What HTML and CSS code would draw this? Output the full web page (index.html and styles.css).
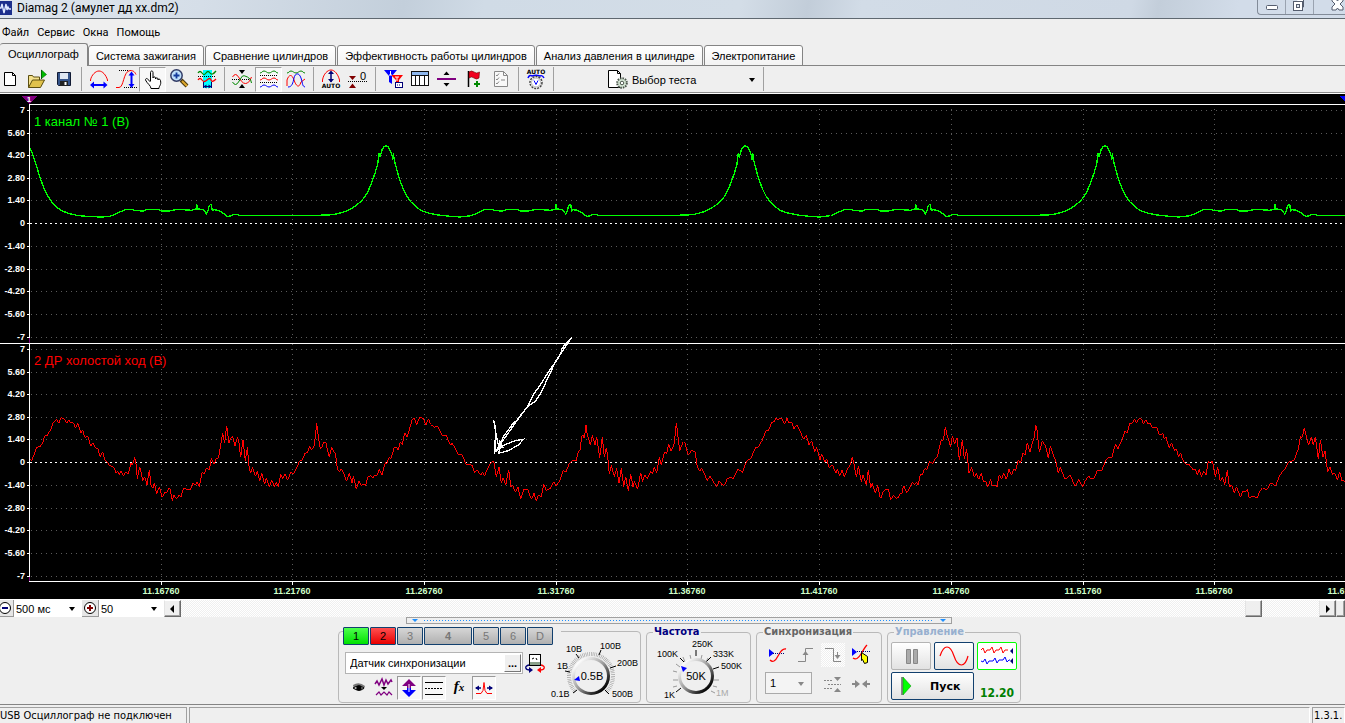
FILE: index.html
```html
<!DOCTYPE html>
<html lang="ru">
<head>
<meta charset="utf-8">
<title>Diamag 2</title>
<link rel="stylesheet" href="styles.css">
</head>
<body>
<header class="titlebar">
  <svg class="app-icon" width="12" height="16" viewBox="0 0 12 16"><path fill="#1c2f8c" d="M0 1h12v14H0z"/><path d="M0 8h1l1-4 2 9 2-9 1 6 1-3 1 2h2" fill="none" stroke="#dfe8ff" stroke-width="1.4"/></svg>
  <h1 class="title">Diamag 2 (амулет дд xx.dm2)</h1>
  <div class="window-buttons">
    <button class="wbtn" aria-label="Свернуть"><svg width="27" height="14"><rect x="8.500" y="5.500" width="11" height="4" rx="1" fill="#fff" stroke="#555d6e"/></svg></button>
    <button class="wbtn" aria-label="Восстановить"><svg width="27" height="14"><path d="M10.500-1h7v8h-3" fill="#fff" stroke="#555d6e"/><rect x="7.500" y="1.500" width="9" height="9" fill="#fff" stroke="#555d6e"/><rect x="10.500" y="4.500" width="3" height="3" fill="#dfe6ef" stroke="#555d6e"/></svg></button>
    <button class="wbtn wbtn-close" aria-label="Закрыть"><svg width="48" height="14"><path d="M18-1h4l1.500 2L25-1h4v2l-3 3 3 3v3h-4l-1.500-2L22 10h-4V7l3-3-3-3z" fill="#fff" stroke="#555d6e"/></svg></button>
  </div>
</header>
<nav class="menu">
  <button>Файл</button><button>Сервис</button><button>Окна</button><button>Помощь</button>
</nav>
<nav class="tabs">
  <button class="tab tab-active">Осциллограф</button><button class="tab">Система зажигания</button><button class="tab">Сравнение цилиндров</button><button class="tab">Эффективность работы цилиндров</button><button class="tab">Анализ давления в цилиндре</button><button class="tab">Электропитание</button>
</nav>
<div class="toolbar">
  <button class="tool" aria-label="Новый"><svg viewBox="0 0 27 26"><path d="M8.500 5.500h8l3 3v10h-11z" fill="#fff" stroke="#000"/><path d="M16.500 5.500v3h3" fill="none" stroke="#000"/></svg></button>
  <button class="tool" aria-label="Открыть"><svg viewBox="0 0 27 26"><path d="M5.500 20.500v-12h4l1 1.500h6v3" fill="#f3e08c" stroke="#5c4f10"/><path d="M5.500 20.500l4-7.500h12l-4 7.500z" fill="#e0c24c" stroke="#5c4f10"/><path d="M18.500 12V3" stroke="#222"/><path d="M18.500 3l5 4.500-5 4z" fill="#0b0" stroke="#060" stroke-width=".6"/></svg></button>
  <button class="tool" aria-label="Сохранить"><svg viewBox="0 0 27 26"><path d="M7.500 5.500h13v13h-12l-1-1z" fill="#35548a" stroke="#111a33"/><path d="M10 6h8v6h-8z" fill="#dfe7f2"/><path d="M10 14h8v5h-8z" fill="#222"/><path d="M14.500 15h2v3h-2z" fill="#fff"/></svg></button>
  <i class="sep"></i>
  <button class="tool" aria-label="Масштаб по времени"><svg viewBox="0 0 27 26"><path d="M5.500 14v-1c1-5 5-9 8.500-9s7 4 8.500 9v1" fill="none" stroke="red"/><path d="M8 18h11" stroke="#00f" stroke-width="2"/><path d="M5 18l4-3.500v7zM22.500 18l-4-3.500v7z" fill="#00f"/></svg></button>
  <button class="tool" aria-label="Масштаб по амплитуде"><svg viewBox="0 0 27 26"><path d="M7 3.500h9M12 20.500h13" stroke="#000" stroke-dasharray="1 1"/><path d="M4 20.500h3c5 0 4-16 11-17 4 0 5 2 6 4" fill="none" stroke="red"/><path d="M19.500 8v9" stroke="#00f" stroke-width="2"/><path d="M19.500 4.500l3 4h-6zM19.500 21l3-4h-6z" fill="#00f"/></svg></button>
  <button class="tool tool-on" aria-label="Рука"><svg viewBox="0 0 27 26"><path d="M11.500 14V5.500c0-2 2.500-2 2.500 0V11c0-1.500 2.500-1.500 2.500 0v1c0-1.500 2.500-1.500 2.500 0v1c0-1.500 2.500-1 2.500.5 1 5-1.500 5-1.500 8h-8c0-3-4-5-5.500-8.500 0-2 2-2 3 0l2 2" fill="#fff" stroke="#000"/></svg></button>
  <button class="tool" aria-label="Лупа"><svg viewBox="0 0 27 26"><path d="M15 13l6 6" stroke="#4a3a10" stroke-width="4"/><path d="M16 14l5 5" stroke="#e0a92c" stroke-width="2"/><circle cx="10.500" cy="8.500" r="5.700" fill="#bfe0fb" stroke="#333c66" stroke-width="1.500"/><path d="M7.500 8.500h6M10.500 5.500v6" stroke="#123a9c" stroke-width="1.800"/></svg></button>
  <button class="tool" aria-label="Фрагмент"><svg viewBox="0 0 27 26"><path d="M10 3h9v18h-9z" fill="#0ff"/><path d="M5 6q2-3 4 0t4 0 4 0 6-2" fill="none" stroke="#080" stroke-width="1.300"/><path d="M5 9.500h18" stroke="#000" stroke-dasharray="1 1"/><path d="M5 13q2-3 4 0t5 0 4 0 5-1" fill="none" stroke="red" stroke-width="1.300"/><path d="M10.500 15v6m8-6v6M11 19.500h8" stroke="#007"/><path d="M10.500 19.500l3-2v4zM18.500 19.500l-3-2v4z" fill="#007"/></svg></button>
  <i class="sep"></i>
  <button class="tool" aria-label="Совместить"><svg viewBox="0 0 27 26"><path d="M4 12.500h20" stroke="#000" stroke-dasharray="1 1"/><path d="M4.500 10q3-5 6 0t5 6 4 0 4-6" fill="none" stroke="red"/><path d="M4.500 15q3 5 6 0t4-6 5 1 4 6" fill="none" stroke="#080"/><path d="M11 3h6l-3 4zM11 21h6l-3-4z"/></svg></button>
  <button class="tool tool-on" aria-label="Раздельно"><svg viewBox="0 0 27 26"><path d="M5 6c2 0 2-2 4-2s3 2 5 2 3-2 5-2 2 2 4 2" fill="none" stroke="#080"/><path d="M5 8.500h18M5 15.500h18" stroke="#000" stroke-dasharray="1 1"/><path d="M5 13c2 0 2-2 4-2s3 2 5 2 3-2 5-2 2 2 4 2" fill="none" stroke="red"/><path d="M5 20c2 0 2-2 4-2s3 2 5 2 3-2 5-2 2 2 4 2" fill="none" stroke="#00f"/></svg></button>
  <button class="tool" aria-label="Наложить"><svg viewBox="0 0 27 26"><path d="M5 6c2 0 2-2 4-2s3 2 5 2 3-2 5-2 2 2 4 2" fill="none" stroke="#080"/><path d="M5 19V13c2-6 5-6 7 0s5 9 7 2l4-3" fill="none" stroke="red"/><path d="M6 20c4 0 5-4 6-9s5-6 7 0 1 8 4 9" fill="none" stroke="#00f"/></svg></button>
  <i class="sep"></i>
  <button class="tool" aria-label="Автомасштаб"><svg viewBox="0 0 27 26"><path d="M5.500 15v-2c1-6 5-10 8.500-10s7 4 8.500 10v2" fill="none" stroke="red"/><path d="M14 5v10" stroke="#007" stroke-width="1.500"/><path d="M14 3.500l3 3.500h-6zM14 15.500l3-3.500h-6z" fill="#007"/><text class="auto" x="14" y="21">AUTO</text></svg></button>
  <button class="tool" aria-label="Обнулить"><svg viewBox="0 0 27 26"><path d="M4 14.500h19" stroke="#000" stroke-dasharray="1 1"/><path d="M5 9h7l-3.500 4zM5 21h7l-3.500-4.500z" fill="#800000"/><text class="zero" x="16" y="13">0</text></svg></button>
  <i class="sep"></i>
  <button class="tool" aria-label="Фильтр"><svg viewBox="0 0 27 26"><path d="M5 3h13l-5 6v8l-3-2V9z" fill="#00f"/><path d="M12 8h12l-4 5v5l-3-1v-4z" fill="red"/><path d="M11.500 4v4M10 8h3M16 10h4M18 10v4" stroke="#fff"/><rect x="16.500" y="15.500" width="7" height="5" fill="#fff" stroke="#007"/><path d="M18 18h4" stroke="#007" stroke-dasharray="1 1"/></svg></button>
  <button class="tool" aria-label="Таблица"><svg viewBox="0 0 27 26"><rect x="5.500" y="4.500" width="17" height="14" fill="#fff" stroke="#111"/><path d="M6 5h16v3H6z" fill="#8fb8ef"/><path d="M6 8.500h16M9.500 8v10M13.500 8v10M18.500 8v10" stroke="#111"/></svg></button>
  <button class="tool" aria-label="Маркер"><svg viewBox="0 0 27 26"><path d="M4 12h19" stroke="#800080" stroke-width="2"/><path d="M10.500 8h6l-3-3.500zM10.500 16h6l-3 3.500z"/></svg></button>
  <button class="tool" aria-label="Добавить флаг"><svg viewBox="0 0 27 26"><path d="M8.500 4v16" stroke="#000" stroke-width="1.500"/><path d="M9 5q2.500-2 5 0t5.500 0l-.5 6q-2.500 2-5 0t-5 0z" fill="#f00020" stroke="#600" stroke-width=".6"/><path d="M17 14v6M14 17h6" stroke="#080" stroke-width="2"/></svg></button>
  <button class="tool" aria-label="Список" disabled><svg viewBox="0 0 27 26"><path d="M7.500 4.500h9l4 4v11h-13z" fill="#f8f8f8" stroke="#888"/><path d="M16.500 4.500v4h4M9 8l1 1 2-2.500M9 12l1 1 2-2.500M9 16l1 1 2-2.500M14 13h4" fill="none" stroke="#888"/></svg></button>
  <i class="sep"></i>
  <button class="tool" aria-label="Автонапряжение"><svg viewBox="0 0 27 26"><text class="auto" x="14" y="7">AUTO</text><path d="M6 11c1-3 3-3 4-2 3-1 5-1 8 0 2-1 3 0 4 2" fill="none" stroke="#00f" stroke-width="1.500"/><circle cx="14" cy="15.500" r="6" fill="#fff" stroke="#444" stroke-width="1.500" stroke-dasharray="2 1"/><circle cx="14" cy="15.500" r="4.500" fill="#fff" stroke="#888" stroke-width=".6"/><path d="M12 13.500l2 4 2-4" fill="none" stroke="#00f"/></svg></button>
  <i class="sep"></i>
  <button class="test-picker"><svg width="22" height="22"><path d="M1.500 1.500h9l3 3v14h-12z" fill="#fff" stroke="#000"/><path d="M10.500 1.500v3h3" fill="none" stroke="#000"/><circle cx="15" cy="14" r="4.800" fill="#d9ead9" stroke="#4a544a" stroke-width="2" stroke-dasharray="1.500 1"/><circle cx="15" cy="14" r="1.800" fill="#fff" stroke="#4a544a"/></svg><span>Выбор теста</span><b class="caret"></b></button>
  <i class="sep"></i>
</div>

<main class="scope">
<svg class="plot" width="100%" height="505" shape-rendering="crispEdges">
  <g class="grid">
    <path d="M31 16.500h9999M31 39.500h9999M31 61.500h9999M31 84.500h9999M31 106.500h9999M31 152.500h9999M31 175.500h9999M31 197.500h9999M31 220.500h9999M31 243.500h9999"/>
    <path d="M31 255.500h9999M31 278.500h9999M31 300.500h9999M31 323.500h9999M31 345.500h9999M31 391.500h9999M31 414.500h9999M31 436.500h9999M31 459.500h9999M31 482.500h9999"/>
    <path d="M161.500 15v228M292.500 15v228M424.500 15v228M556.500 15v228M687.500 15v228M819.500 15v228M951.500 15v228M1083.500 15v228M1214.500 15v228"/>
    <path d="M161.500 250v236M292.500 250v236M424.500 250v236M556.500 250v236M687.500 250v236M819.500 250v236M951.500 250v236M1083.500 250v236M1214.500 250v236"/>
  </g>
  <path class="zero-line" d="M30 129.500h9999M30 368.500h9999"/>
  <path class="axis" d="M29 10.500h9999M0 249.500h9999M29 487.500h9999M29.500 10v233M29.500 250v232"/>
  <path class="axis" d="M27 16.500h3M27 39.500h3M27 61.500h3M27 84.500h3M27 106.500h3M27 129.500h3M27 152.500h3M27 175.500h3M27 197.500h3M27 220.500h3M27 243.500h3M27 255.500h3M27 278.500h3M27 300.500h3M27 323.500h3M27 345.500h3M27 368.500h3M27 391.500h3M27 414.500h3M27 436.500h3M27 459.500h3M27 482.500h3"/>
  <path class="ticks" d="M161.500 488v3M292.500 488v3M424.500 488v3M556.500 488v3M687.500 488v3M819.500 488v3M951.500 488v3M1083.500 488v3M1214.500 488v3"/>
  <path class="cursor-line" d="M29.500 3v7M29.500 244v5M29.500 483v4"/>
  <path class="cursor" d="M22 2h15l-7.500 8z"/>
  <text class="cursor-text" x="29" y="8">1</text>
  <path fill="#00f" d="M1339 2h8v7z"/>
  <g class="ylabels">
    <text x="25" y="19">7</text><text x="25" y="42">5.60</text><text x="25" y="64">4.20</text><text x="25" y="87">2.80</text><text x="25" y="109">1.40</text><text x="25" y="132">0</text><text x="25" y="155">-1.40</text><text x="25" y="178">-2.80</text><text x="25" y="200">-4.20</text><text x="25" y="223">-5.60</text><text x="25" y="246">-7</text>
    <text x="25" y="258">7</text><text x="25" y="281">5.60</text><text x="25" y="303">4.20</text><text x="25" y="326">2.80</text><text x="25" y="348">1.40</text><text x="25" y="371">0</text><text x="25" y="394">-1.40</text><text x="25" y="417">-2.80</text><text x="25" y="439">-4.20</text><text x="25" y="462">-5.60</text><text x="25" y="485">-7</text>
  </g>
  <g class="xlabels">
    <text x="161" y="500">11.16760</text><text x="292" y="500">11.21760</text><text x="424" y="500">11.26760</text><text x="556" y="500">11.31760</text><text x="687" y="500">11.36760</text><text x="819" y="500">11.41760</text><text x="951" y="500">11.46760</text><text x="1083" y="500">11.51760</text><text x="1214" y="500">11.56760</text><text x="1346" y="500">11.61760</text>
  </g>
  <text class="channel ch1" x="34" y="32">1 канал № 1 (В)</text>
  <text class="channel ch2" x="34" y="271">2 ДР холостой ход (В)</text>
  <g class="trace trace1" transform="translate(0 -4) scale(.333333)">
    <polyline points="90,175 95,185 102,205 110,230 120,262 130,290 140,312 150,328 160,342 170,352 185,362 205,370 235,377 260,379 300,381 325,380 335,377"/>
    <polyline id="cycle" points="335,377 350,371 362,365 375,359 400,359 405,362 430,363 440,359 475,359 485,363 508,363 520,360 535,358 575,361 588,357 590,342 593,357 605,358 612,361 619,372 624,363 628,346 634,343 637,362 642,359 655,361 670,370 682,379 692,378 700,374 712,374 720,377 750,376 900,377 985,375 1005,373 1020,369 1035,365 1055,355 1070,345 1082,335 1095,320 1105,302 1115,278 1125,250 1133,222 1137,188 1140,200 1146,180 1152,170 1158,167 1165,171 1172,185 1176,195 1178,210 1180,190 1184,215 1192,245 1200,272 1210,298 1220,318 1232,335 1248,350 1262,361 1285,369 1315,375 1350,379 1380,381 1413,377"/>
    <use href="#cycle" x="1078"/><use href="#cycle" x="2157"/><use href="#cycle" x="3235"/>
  </g>
  <g class="trace trace2">
    <polyline transform="translate(0 246) scale(.333333)" points="90,358 95,362 100,350 105,335 110,322 120,320 127,312 133,290 137,284 141,288 147,276 152,270 158,250 163,244 169,238 176,250 183,234 187,234 195,240 200,250 206,239 210,246 220,248 227,265 233,248 243,278 248,270 254,292 264,290 272,318 279,310 288,325 293,325 301,350 308,336 315,360 330,377 340,380 348,398 353,393 358,404 363,394 371,408 377,396 385,401 393,368 397,376 404,352 408,370 412,416 419,380 424,400 428,422 434,410 441,434 448,390 453,435 459,445 463,428 470,463 478,440 486,472 495,457 500,458 507,443 511,450 517,482 522,466 530,477 536,466 543,470 551,443 558,447 572,448 580,428 586,436 591,425 598,441 606,398 612,402 620,383 628,390 634,355 642,372 648,358 656,352 662,315 668,280 674,310 680,257 687,310 691,295 698,290 705,317 713,292 717,310 722,352 729,300 736,362 742,322 748,388 752,400 757,382 767,409 772,393 779,424 785,398 794,432 799,415 808,442 815,420 823,440 829,427 835,440 842,403 848,416 855,402 863,420 872,397 880,402 890,384 897,366 906,360 915,340 922,338 929,318 935,330 943,316 950,250 955,290 961,326 967,322 971,305 978,310 988,352 995,320 1001,336 1006,340 1012,385 1018,396 1024,386 1031,400 1040,424 1048,400 1056,428 1060,408 1069,447 1077,422 1083,436 1090,432 1097,436 1104,410 1112,407 1118,415 1124,406 1132,405 1138,388 1146,404 1156,368 1161,370 1168,350 1172,358 1182,325 1189,320 1195,331 1201,305 1207,315 1214,278 1221,292 1229,265 1236,240 1243,235 1250,254 1259,231 1270,235 1278,255 1285,236 1292,253 1303,262 1312,257 1320,274"/>
    <polyline transform="translate(440 236) scale(.333333)" points="0,304 8,317 18,316 32,346 36,338 45,355 55,375 66,374 78,402 96,406 104,428 112,420 122,436 127,426 134,437 146,408 158,392 162,400 169,440 177,412 184,458 190,443 197,466 206,420 213,470 218,466 226,486 234,472 242,506 252,478 264,480 274,508 282,490 289,512 296,494 304,502 311,462 319,482 332,474 341,455 348,468 358,455 369,422 378,426 388,400 400,390 408,392 414,368 420,360 425,320 429,316 433,325 438,284 442,318 446,325 451,345 457,316 465,344 470,320 479,384 487,322 493,382 499,353 503,380 508,432 514,406 523,440 530,415 537,460 544,415 551,470 557,440 565,482 572,433 579,470 583,454 593,478 602,428 608,455 614,434 622,447 632,424 637,432 643,412 650,428 658,382 664,405 674,365 680,370 686,342 693,364 697,355 703,340 709,278 714,320 719,362 730,335 735,340 745,376 755,360 765,366 772,410 779,424 785,414 802,452 810,438 820,455 830,470 838,452 846,464 853,466 862,446 870,442 880,446 894,418 908,427 920,392 932,386 946,354 956,350 966,332 977,304 986,300 995,277 1003,275 1007,264 1013,270 1024,263 1034,282 1041,265 1047,278 1054,275 1062,296 1071,284 1083,310 1091,328 1099,316 1107,345 1115,332 1124,365 1130,352 1140,390 1145,372 1155,396 1160,388 1168,414 1177,404 1188,430 1192,418 1199,438 1206,420 1213,440 1222,418 1230,405 1237,382 1242,402 1249,442 1255,408 1264,455 1269,435 1279,465 1285,420 1292,475 1297,460 1306,490 1313,466 1320,502"/>
    <polyline transform="translate(880 286) scale(.333333)" points="0,352 4,354 8,338 16,328 25,328 32,360 40,346 47,355 55,353 62,338 65,342 71,317 80,338 90,322 97,307 104,314 109,306 114,315 121,284 127,284 134,266 141,268 149,244 157,251 166,236 173,228 182,184 190,180 196,140 201,165 212,200 217,168 224,192 231,173 238,241 247,180 253,236 260,208 267,280 275,262 283,292 289,280 296,298 304,280 310,305 317,303 323,322 332,298 337,318 346,316 351,320 358,284 365,297 371,280 379,298 387,268 394,286 401,268 407,272 415,240 421,250 429,220 435,226 442,188 450,216 458,186 463,170 467,134 471,150 478,216 487,184 497,198 505,235 511,198 522,230 528,245 535,280 541,260 553,295 560,295 570,286 586,319 596,298 608,320 617,300 627,288 632,296 641,296 652,272 665,273 677,240 687,233 696,232 706,193 714,206 722,188 728,175 735,154 742,158 749,130 756,130 764,116 769,130 776,116 784,117 791,132 798,119 804,133 810,128 817,142 830,142 839,166 848,160 853,176 858,172 868,205 874,188 884,212 889,208 896,230 902,218 908,240 920,256 926,252 940,270 947,270 952,285 958,268 964,290 971,274 978,284 985,243 992,250 997,243 1006,290 1013,262 1021,304 1028,292 1034,314 1042,270 1048,322 1055,314 1063,340 1069,320 1082,352 1088,334 1097,334 1102,328 1108,354 1118,348 1132,354 1140,332 1148,323 1160,330 1173,308 1187,318 1200,284 1213,270 1226,247 1243,240 1255,206 1261,170 1267,172 1273,143 1279,170 1286,195 1294,170 1300,195 1306,170 1315,238 1321,180 1329,232 1335,214 1343,276 1350,262 1358,284 1364,278 1372,300 1379,275 1386,304 1391,300 1400,316"/>
  </g>
  <g class="trace note" transform="translate(440 236) scale(.333333)">
    <polyline points="395,22 348,92 330,130 302,190 285,215 262,230 234,268 218,282 190,320 180,350"/>
    <polyline points="392,28 380,38 366,55 362,72 345,98 328,122 300,166 280,194 263,230 240,258 215,295 190,330 178,345"/>
    <polyline points="160,270 164,282 169,318 175,345 188,350 180,335 177,368"/>
    <polyline points="161,270 166,300 165,366 180,345 185,352 165,366"/>
    <polyline points="175,370 205,362 235,345 250,328 225,332 195,344 180,352 165,366"/>
  </g>
</svg>
</main>

<div class="timebar">
  <button class="flat" aria-label="Уменьшить"><svg width="13" height="16"><circle cx="5" cy="8" r="5.500" fill="#fff" stroke="#000"/><path d="M2 8h6" stroke="#007" stroke-width="2"/></svg></button>
  <label class="combo combo-a"><select aria-label="Развёртка"><option>500 мс</option></select></label>
  <button class="flat" aria-label="Увеличить"><svg width="16" height="16"><circle cx="8" cy="8" r="5.500" fill="#fff" stroke="#000"/><path d="M5 8h6M8 5v6" stroke="#800000" stroke-width="2"/></svg></button>
  <label class="combo combo-b"><select aria-label="Масштаб"><option>50</option></select></label>
  <button class="raised" aria-label="Влево"><svg width="14" height="14"><path d="M9 3v8L5 7z"/></svg></button>
  <div class="track"><span class="raised thumb"></span></div>
  <button class="raised" aria-label="Вправо"><svg width="14" height="14"><path d="M6 3v8l4-4z"/></svg></button>
  <span class="raised corner"></span>
</div>

<section class="dock">
  <div class="handle"><b></b><i></i><b></b></div>
  <div class="groups">
    <div class="group group-channel">
      <div class="channel-side">
        <div class="channels">
          <button class="chan chan-green">1</button><button class="chan chan-red">2</button><button class="chan">3</button><button class="chan chan-wide">4</button><button class="chan">5</button><button class="chan">6</button><button class="chan">D</button>
        </div>
        <div class="name-row">
          <div class="name-box"><input type="text" value="Датчик синхронизации" aria-label="Название канала"><button class="dots" aria-label="Обзор">...</button></div>
          <button class="mini" aria-label="Прибор"><svg width="24" height="22"><rect x="6.500" y="1.500" width="11" height="11" fill="#fff" stroke="#000"/><path d="M7 9h10v3H7z" fill="#8aa08a"/><path d="M9 6l2-1m2 0l1 2" stroke="#000"/><path d="M6 12c-5 1-4 5 1 5" fill="none" stroke="#007" stroke-width="1.300"/><path d="M6 14l4 3-4 3z" fill="#007"/><path d="M18 12c5 1 4 5-1 5" fill="none" stroke="red" stroke-width="1.300"/><path d="M18 14l-4 3 4 3z" fill="red"/></svg></button>
        </div>
        <div class="mode-row">
          <button class="mini" aria-label="Видимость"><svg width="24" height="22"><path d="M6 8q6-4 12 1l-1 3q-5 4-10 0z" fill="#777"/><path d="M6 11q6-4 11 0-5 4-11 0z" fill="#ddd" stroke="#000"/><circle cx="12" cy="11" r="2.700"/></svg></button>
          <button class="mini" aria-label="Фильтрация"><svg width="24" height="22"><path d="M3 7l2-3 2 4 3-6 2 6 2-5 2 4 3-4 1 2" fill="none" stroke="#800080" stroke-width="1.500"/><path d="M9 10h6l-3 3z"/><path d="M4 18l3-3 2 3 3-3 3 3 2-3 3 3" fill="none" stroke="#800080" stroke-width="1.200"/></svg></button>
          <button class="mini mini-on" aria-label="Смещение"><svg width="24" height="22"><path d="M12 2l7 7h-5v2h-4V9H5z" fill="#800080"/><path d="M12 20l7-7h-5v-2h-4v2H5z" fill="#00f"/><path d="M12 7v8" stroke="#fff"/></svg></button>
          <button class="mini mini-on" aria-label="Линии"><svg width="24" height="22"><path d="M3 5.500h18M3 17.500h18" stroke="#000"/><path d="M3 11.500h18" stroke="#000" stroke-dasharray="2 1"/></svg></button>
          <button class="mini fx" aria-label="Функция">f<small>x</small></button>
          <button class="mini mini-on" aria-label="Импульс"><svg width="24" height="22"><path d="M4 16.500h5l2-3 1-8 1 8 2 3h5" fill="none" stroke="red"/><path d="M4 11h5m6 0h5" stroke="#007" stroke-width="1.600"/><path d="M7 8.500v5L3 11zM17 8.500v5l4-2.500z" fill="#007"/></svg></button>
        </div>
      </div>
      <svg class="dial" width="92" height="68">
        <defs><linearGradient id="rim" x1="0" y1="0" x2="1" y2="1"><stop offset=".15" stop-color="#fff"/><stop offset=".5" stop-color="#999"/><stop offset=".85" stop-color="#000"/></linearGradient></defs>
        <circle class="scale" cx="44" cy="44" r="22" pathLength="240" transform="rotate(135 44 44)" stroke-dasharray="1 2 1 2 1 2 1 2 1 2 1 2 1 2 1 2 1 2 1 2 1 2 1 2 1 2 1 2 1 2 1 2 1 2 1 2 1 2 1 2 1 2 1 2 1 2 1 2 1 2 1 2 1 2 1 2 1 2 1 2 1 2 1 2 1 2 1 2 1 2 1 2 1 2 1 2 1 2 1 2 1 2 1 2 1 2 1 2 1 2 1 2 1 2 1 2 1 2 1 2 1 2 1 2 1 2 1 2 1 2 1 2 1 2 1 2 1 2 1 2 1 60"/>
        <path class="marks" d="M30 58l-4 3M23 40l-5-1M32 26l-3-4M52 23l2-5M63 36l6-2M58 58l4 4"/>
        <circle cx="44" cy="44" r="19" fill="url(#rim)"/><circle cx="44" cy="44" r="16" fill="#efefef"/>
        <path fill="#00f" d="M27 48l5-4 1 5z"/>
        <text class="dial-value" x="45" y="48">0.5В</text>
        <text x="4" y="65">0.1В</text><text x="10" y="37">1В</text><text x="19" y="20">10В</text><text x="53" y="17">100В</text><text x="70" y="34">200В</text><text x="65" y="65">500В</text>
      </svg>
    </div>
    <fieldset class="group group-rate"><legend>Частота</legend>
      <svg class="dial" width="100" height="64" viewBox="0 2 100 64">
        <path class="scale-lines" d="M31 44h-5M30 50l-4 1M30 36l-4-1M33 31l-4-3M38 26l-2-5M44 23l-1-4M54 23l1-4M59 26l2-4M67 44h5M66 50l4 1M64 55l4 2"/>
        <path class="marks" d="M34 52l-5 4M37 26l-4-4M49 20v-6M59 26l5-5M66 33l6-2"/>
        <circle cx="49" cy="40" r="18" fill="url(#rim)"/><circle cx="49" cy="40" r="15" fill="#efefef"/>
        <path fill="#00f" d="M34 30l6 2-4 4z"/>
        <text class="dial-value" x="49" y="44">50K</text>
        <text x="17" y="62">1K</text><text x="10" y="21">100K</text><text x="45" y="11">250K</text><text x="66" y="21">333K</text><text x="74" y="33">500K</text><text class="off" x="69" y="60">1M</text>
      </svg>
    </fieldset>
    <fieldset class="group group-sync"><legend>Синхронизация</legend>
      <div class="sync-grid">
        <button class="mini" aria-label="Уровень"><svg width="24" height="22"><path d="M5 16q4 4 8-4t8-7" fill="none" stroke="red" stroke-width="1.300"/><path d="M4 5l5 4-5 4z" fill="#00f"/><path d="M8 9.500h12" stroke="#007" stroke-dasharray="1 1"/></svg></button>
        <button class="mini" aria-label="Фронт" disabled><svg width="24" height="22"><path d="M5 17.500h7.500v-13H20" fill="none" stroke="#888"/><path d="M12.500 7l3 4h-6z" fill="#888"/></svg></button>
        <button class="mini dither" aria-label="Спад" disabled><svg width="24" height="22"><path d="M4 4.500h8.500v13H20M16.500 8v6" fill="none" stroke="#888"/><path d="M16.500 15l3-4h-6z" fill="#888"/></svg></button>
        <button class="mini" aria-label="Выбор уровня"><svg width="24" height="22"><path d="M4 14q4 3 8-4t6-9" fill="none" stroke="red" stroke-width="1.300"/><path d="M3 4l5 4-5 4z" fill="#00f"/><path d="M8 7.500h13" stroke="#007" stroke-dasharray="1 1"/><path d="M12.500 8.500l6 4v6l-3 1-2-4-1 1z" fill="#ff0" stroke="#000"/></svg></button>
        <label class="sync-select"><select aria-label="Канал" disabled><option>1</option></select></label>
        <button class="mini" aria-label="Порог" disabled><svg width="24" height="22"><path d="M3 7.500h9M3 15.500h9M7 11.500h13" stroke="#888" stroke-dasharray="2 1"/><path d="M13 4h7l-3.500 4zM13 19h7l-3.500-4z" fill="#888"/></svg></button>
        <button class="mini" aria-label="Сжать" disabled><svg width="24" height="22"><path d="M3 11h4m10 0h4" stroke="#888" stroke-width="2"/><path d="M6 7l5 4-5 4zM18 7l-5 4 5 4z" fill="#888"/></svg></button>
      </div>
    </fieldset>
    <fieldset class="group group-run"><legend>Управление</legend>
      <div class="run-grid">
        <button class="big big-off" aria-label="Пауза" disabled><svg width="36" height="24"><path d="M13.500 5.500h4v14h-4zM20.500 5.500h4v14h-4z" fill="#aaa" stroke="#888"/></svg></button>
        <button class="big" aria-label="Синус"><svg width="36" height="24"><path d="M4 12C8 0 14 0 18 12s11 12 14 0" fill="none" stroke="red" stroke-width="1.200"/></svg></button>
        <button class="big big-on" aria-label="Непрерывно"><svg width="36" height="24"><path d="M2 6l2-2 2 5 2-3h3l2-3 2 6 2-3h3l2-3 2 6 2-3h3" fill="none" stroke="red"/><path d="M2 17l2 1 2-3 2 5 2-3h4l2-3 2 5 2-3h4l2-3 2 5 2-2h1" fill="none" stroke="#00f"/><path d="M34 4v6l-3-3zM34 14v6l-3-3z" fill="#007"/></svg></button>
        <button class="big start"><svg width="20" height="20"><path d="M2 1v18" stroke="#888" stroke-width="2"/><path d="M3 1l8 9-8 9z" fill="#0f0" stroke="#080" stroke-width=".5"/></svg><span>Пуск</span></button>
        <output class="reading">12.20</output>
      </div>
    </fieldset>
  </div>
</section>
<footer class="status"><span class="cell cell-a">USB Осциллограф не подключен</span><span class="cell cell-b"></span><span class="cell cell-c">1.3.1.</span></footer>
</body>
</html>
```

FILE: styles.css
```css
* { box-sizing: border-box; }
body {
  margin: 0; min-height: 100vh; display: flex; flex-direction: column; overflow: hidden;
  background: #efefef; color: #000; font: 11px/14px "Liberation Sans", Arial, sans-serif;
}
button, input, select { font: inherit; color: inherit; margin: 0; padding: 0; border: 0; background: none; border-radius: 0; }
svg { display: block; flex: none; }
fieldset { min-width: 0; margin: 0; }

.titlebar {
  display: flex; align-items: flex-start; height: 19px; border-bottom: 1px solid #5f6870;
  background: linear-gradient(100deg, #dfe6ee 0, #d5dee8 15%, #c3cfdb 30%, #d0dbe6 36%, #d3dde7 55%, #c2cdd9 60%, #d2dce7 64%, #cfd9e5 84%, #c3ceda 86%, #d2dce9 92%);
}
.title { margin: 0 0 0 5px; font: 12px/16px Roboto, "Open Sans", sans-serif; }
.window-buttons { margin-left: auto; display: flex; height: 15px; border: 1px solid #828b98; border-width: 0 0 1px 1px; border-radius: 0 0 0 4px; }
.wbtn { border-right: 1px solid #9aa3b0; height: 14px; overflow: hidden; }
.wbtn-close { border: 0; width: 31px; }

.menu { display: flex; gap: 8px; height: 24px; padding: 0 2px; font: 11px/27px Roboto, "Open Sans", sans-serif; }
.tabs { display: flex; align-items: flex-end; gap: 1px; height: 23px; box-shadow: inset 0 -1px #848484; }
.tab { height: 21px; padding: 0 7px; border: 1px solid #848484; border-radius: 3px 3px 0 0; background: linear-gradient(#fff, #f3f3f3); white-space: nowrap; }
.tab-active { height: 23px; margin-right: -1px; padding: 0 8px 2px; border-width: 1px 1px 0 0; background: #efefef; }
.toolbar { display: flex; height: 28px; padding-top: 1px; margin-left: -4px; border-bottom: 1px solid #fff; box-shadow: inset 0 -1px #8d8d8d; }
.tool { width: 27px; height: 25px; }
.tool svg { width: 27px; height: 26px; }
.tool-on { border: 1px solid #a0a0a0; border-color: #a0a0a0 #fff #fff #a0a0a0; background: #f8f8f8; }
.tool-on svg { margin: -1px; }
.sep { width: 8px; height: 24px; background: linear-gradient(#a0a0a0, #a0a0a0) 4px 0 / 1px 100% no-repeat; }
.auto { font: 700 6px "DejaVu Sans", sans-serif; text-anchor: middle; }
.zero { font: 11px "Liberation Sans", sans-serif; }
.test-picker { display: flex; align-items: center; width: 202px; padding: 0 4px 0 50px; }
.test-picker span { margin: 0 auto 0 3px; }
.caret, .combo::after, .sync-select::after { border: 3px solid transparent; border-top: 4px solid #000; border-bottom: 0; }

.scope { background: #000; }
.plot text { font: 700 9px "Liberation Sans", Arial, sans-serif; fill: #fff; }
.grid path { stroke: #5a5a5a; stroke-dasharray: 1 4; }
.zero-line { stroke: #fff; stroke-dasharray: 2 3; }
.axis, .ticks { stroke: #fff; }
.cursor-line { stroke: #800080; }
.cursor { fill: #800080; }
.plot .cursor-text { font-size: 8px; text-anchor: middle; }
.ylabels { text-anchor: end; }
.plot .xlabels text { fill: #cfffc8; text-anchor: middle; }
.plot .channel { font-size: 13px; font-weight: 400; }
.plot .ch1 { fill: #0f0; }
.plot .ch2 { fill: #f00; }
.trace { fill: none; stroke-width: 3px; }
.trace1 { stroke: #0f0; stroke-width: 4px; }
.trace2 { stroke: #f00; }
.note { stroke: #fff; stroke-width: 4px; }

.timebar { display: flex; height: 18px; padding-top: 1px; background: #fff; }
.flat { background: #e6e6e6; border: 1px solid #999; border-width: 0 1px 1px 0; overflow: hidden; }
.combo { position: relative; background: #fff; }
.combo-a { width: 68px; }
.combo-b { width: 65px; }
.combo select, .sync-select select { appearance: none; width: 100%; height: 100%; padding-left: 2px; opacity: 1; }
.combo::after, .sync-select::after { content: ""; position: absolute; right: 7px; top: 7px; pointer-events: none; }
.raised { display: block; width: 17px; height: 17px; background: #efefef; border: 1px solid; border-color: #fff #6a6a6a #6a6a6a #e3e3e3; box-shadow: inset -1px -1px #a0a0a0; }
.track, .dither { background: repeating-conic-gradient(#fff 0 25%, #efefef 0 50%) 0 0 / 2px 2px; }
.track { flex: 1; }
.thumb { margin-left: auto; margin-right: 57px; }
.corner { width: 9px; }

.dock { flex: 1; border-bottom: 1px solid #848484; padding-left: 14px; display: flex; flex-direction: column; align-items: center; }
.handle { display: flex; align-items: center; justify-content: space-between; gap: 6px; width: 546px; height: 7px; padding: 0 5px; border: 1px solid #a0a0a0; margin-right: 2px; }
.handle b { border: 3px solid transparent; border-top: 3px solid #1e90ff; border-bottom: 0; }
.handle i { flex: 1; height: 1px; background: repeating-linear-gradient(90deg, #1e90ff 0 1px, transparent 1px 3px); }
.groups { display: flex; gap: 5px; align-items: flex-end; padding: 2px 0 1px; }
.group { border: 1px solid #b9b9b9; border-radius: 4px; height: 72px; padding: 0; }
fieldset.group { height: 77px; position: relative; }
legend { margin-left: 6px; padding: 0 1px; font: 700 11px/12px "DejaVu Sans Condensed", "DejaVu Sans", Verdana, sans-serif; }
.group-channel { display: flex; width: 303px; padding-left: 4px; }
.channels { display: flex; gap: 1px; width: 218px; margin-top: -5px; background: #efefef; }
.chan { width: 26px; height: 18px; border: 1px solid #12406e; border-radius: 1px; color: #777; background: linear-gradient(#d6d6d6, #b0b0b0); }
.chan-green { color: #000; background: linear-gradient(#4dff4d, #00e000); }
.chan-red { color: #000; background: linear-gradient(#ff5050, #e80000); }
.chan-wide { width: 48px; font-weight: 700; }
.channel-side { width: 204px; flex: none; }
.name-row { display: flex; margin-top: 7px; padding-left: 2px; }
.name-box { display: flex; width: 178px; height: 22px; padding: 1px; border: 1px solid #b4b4b4; background: #fff; }
.name-box input { flex: 1; min-width: 0; padding: 0 3px; }
.dots { width: 17px; background: #efefef; border: 1px solid; border-color: #fff #777 #777 #fff; font-weight: 700; line-height: 10px; }
.mini { width: 24px; height: 24px; display: flex; align-items: center; justify-content: center; }
.mode-row { display: flex; gap: 1px; padding-left: 4px; }
.mini-on { border: 1px solid; border-color: #999 #fff #fff #999; background: #f7f7f7; }
.fx { font: italic 700 15px/20px "Liberation Serif", serif; align-items: baseline; }
.fx small { font-size: 11px; }
.dial text { font: 9px "Liberation Sans", sans-serif; }
.dial .dial-value { font-size: 11px; text-anchor: middle; }
.dial .off { fill: #aaa; }
.scale { fill: none; stroke: #999; stroke-width: 4px; }
.scale-lines { stroke: #999; }
.marks { stroke: #000; }
.group-rate { width: 105px; color: #000080; }
.group-rate .dial { fill: #000; }
.group-sync { width: 126px; color: #666; }
.sync-grid { display: grid; grid-template-columns: repeat(4, 24px); column-gap: 4px; row-gap: 5px; padding: 5px 0 0 8px; }
.sync-select { position: relative; grid-column: span 2; width: 47px; height: 22px; border: 1px solid #aaa; background: #f4f4f4; color: #000; }
.sync-select select { padding-left: 4px; color: #000; }
.sync-select::after { top: 9px; border-top-color: #888; }
.group-run { width: 134px; }
.group-run legend { color: #97b0cf; }
.run-grid { display: grid; grid-template-columns: repeat(3, 40px); gap: 2px 3px; padding: 4px 0 0 3px; color: #000; }
.big { height: 28px; display: flex; align-items: center; justify-content: center; border: 1px solid #12406e; border-radius: 2px; background: linear-gradient(#fff, #e2e2e2); }
.big-off { border-color: #b4b4b4; }
.big-on { border: 1px solid #0f0; background: #fff; }
.start { grid-column: span 2; font: 700 11px "DejaVu Sans", Verdana, sans-serif; justify-content: flex-start; padding-left: 8px; }
.start span { margin-left: 10px; }
.reading { color: #008000; font: 700 12px/14px "DejaVu Sans Condensed", Verdana, sans-serif; align-self: end; text-align: center; }

.status { display: flex; gap: 2px; height: 18px; padding-top: 2px; font: 11px/15px "DejaVu Sans Condensed", "Open Sans", sans-serif; white-space: nowrap; }
.cell { border: 1px solid #a0a0a0; border-width: 1px 1px 0; border-right-color: #fff; }
.cell-a { width: 187px; border-left: 0; border-right-color: #a0a0a0; }
.cell-b { flex: 1; }
.cell-c { width: 33px; padding-left: 1px; }
```
